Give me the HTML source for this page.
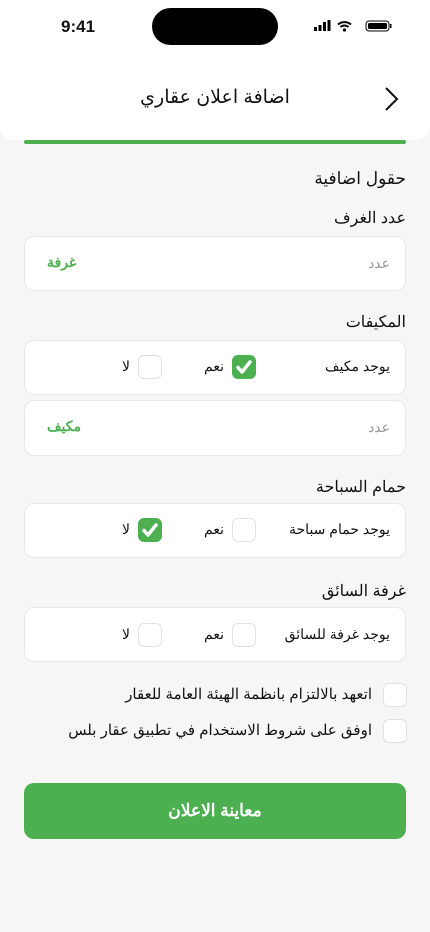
<!DOCTYPE html>
<html><head><meta charset="utf-8"><style>
*{margin:0;padding:0;box-sizing:border-box}
body{width:430px;height:932px;background:#f6f6f6;font-family:"Liberation Sans","Noto Sans CJK SC",sans-serif;position:relative;overflow:hidden;color:#111}
.a{position:absolute}
.hdr{left:0;top:0;width:430px;height:140px;background:#fff;border-radius:0 0 14px 14px}
.card{position:absolute;left:24px;width:382px;background:#fff;border:1px solid #e8e8e8;border-radius:10px}
.lbl{position:absolute;right:24px;font-size:15px;direction:rtl;white-space:nowrap}
.t{position:absolute;font-size:14px;direction:rtl;white-space:nowrap}
.cb{position:absolute;width:24px;height:24px;border:1px solid #e2e2e2;border-radius:6px;background:#fff}
.cb.on{background:#4caf50;border-color:#4caf50}
</style></head><body>
<div class="a hdr"></div>
<div class="a" style="left:61px;top:17px;font-size:17px;font-weight:bold">9:41</div>
<div class="a" style="left:152px;top:8px;width:126px;height:37px;background:#000;border-radius:19px"></div>
<svg class="a" style="left:313px;top:19px" width="80" height="14" viewBox="0 0 80 14">
<rect x="1" y="8" width="3" height="4" fill="#000"/><rect x="5.5" y="6" width="3" height="6" fill="#000"/><rect x="10" y="3" width="3" height="9" fill="#000"/><rect x="14.5" y="1" width="3" height="11" fill="#000"/>
<path d="M25 5.5a10 10 0 0 1 13 0M27.5 8a6 6 0 0 1 8 0" stroke="#000" stroke-width="2" fill="none"/><circle cx="31.5" cy="11" r="1.6" fill="#000"/>
<rect x="53" y="2" width="23" height="10" rx="3" fill="none" stroke="#000" stroke-width="1"/><rect x="55" y="4" width="19" height="6" rx="1.5" fill="#000"/><rect x="77" y="5" width="1.5" height="4" fill="#000"/>
</svg>
<div class="a" style="left:0;width:430px;top:86px;text-align:center;font-size:19px">اضافة اعلان عقاري</div>
<svg class="a" style="left:382px;top:86px" width="18" height="26" viewBox="0 0 18 26"><path d="M4 2l11 11L4 24" stroke="#111" stroke-width="2" fill="none"/></svg>
<div class="a" style="left:24px;top:140px;width:382px;height:4px;background:#4caf50;border-radius:2px"></div>

<div class="lbl" style="top:169px;font-size:17px">حقول اضافية</div>
<div class="lbl" style="top:208px;font-size:16px">عدد الغرف</div>
<div class="card" style="top:236px;height:55px"></div>
<div class="t" style="right:40px;top:255px;color:#999">عدد</div>
<div class="t" style="left:47px;top:254px;color:#4caf50;font-weight:bold">غرفة</div>

<div class="lbl" style="top:312px;font-size:16px">المكيفات</div>
<div class="card" style="top:340px;height:55px"></div>
<div class="t" style="right:40px;top:358px">يوجد مكيف</div>
<div class="cb on" style="left:232px;top:355px"></div>
<svg class="a" style="left:232px;top:355px" width="24" height="24"><path d="M6 12.5l4 4.5 8-10" stroke="#fff" stroke-width="3.5" fill="none" stroke-linecap="round" stroke-linejoin="round"/></svg>
<div class="t" style="right:206px;top:358px">نعم</div>
<div class="cb" style="left:138px;top:355px"></div>
<div class="t" style="right:300px;top:358px">لا</div>
<div class="card" style="top:400px;height:56px"></div>
<div class="t" style="right:40px;top:419px;color:#999">عدد</div>
<div class="t" style="left:47px;top:418px;color:#4caf50;font-weight:bold">مكيف</div>

<div class="lbl" style="top:477px;font-size:16px">حمام السباحة</div>
<div class="card" style="top:503px;height:55px"></div>
<div class="t" style="right:40px;top:521px">يوجد حمام سباحة</div>
<div class="cb" style="left:232px;top:518px"></div>
<div class="t" style="right:206px;top:521px">نعم</div>
<div class="cb on" style="left:138px;top:518px"></div>
<svg class="a" style="left:138px;top:518px" width="24" height="24"><path d="M6 12.5l4 4.5 8-10" stroke="#fff" stroke-width="3.5" fill="none" stroke-linecap="round" stroke-linejoin="round"/></svg>
<div class="t" style="right:300px;top:521px">لا</div>

<div class="lbl" style="top:581px;font-size:16px">غرفة السائق</div>
<div class="card" style="top:607px;height:55px"></div>
<div class="t" style="right:40px;top:626px">يوجد غرفة للسائق</div>
<div class="cb" style="left:232px;top:623px"></div>
<div class="t" style="right:206px;top:626px">نعم</div>
<div class="cb" style="left:138px;top:623px"></div>
<div class="t" style="right:300px;top:626px">لا</div>

<div class="cb" style="left:383px;top:683px"></div>
<div class="lbl" style="right:58px;top:685px">اتعهد بالالتزام بانظمة الهيئة العامة للعقار</div>
<div class="cb" style="left:383px;top:719px"></div>
<div class="lbl" style="right:58px;top:721px">اوفق على شروط الاستخدام في تطبيق عقار بلس</div>

<div class="a" style="left:24px;top:783px;width:382px;height:56px;background:#4caf50;border-radius:10px;color:#fff;font-size:17px;font-weight:bold;text-align:center;line-height:56px">معاينة الاعلان</div>
</body></html>
